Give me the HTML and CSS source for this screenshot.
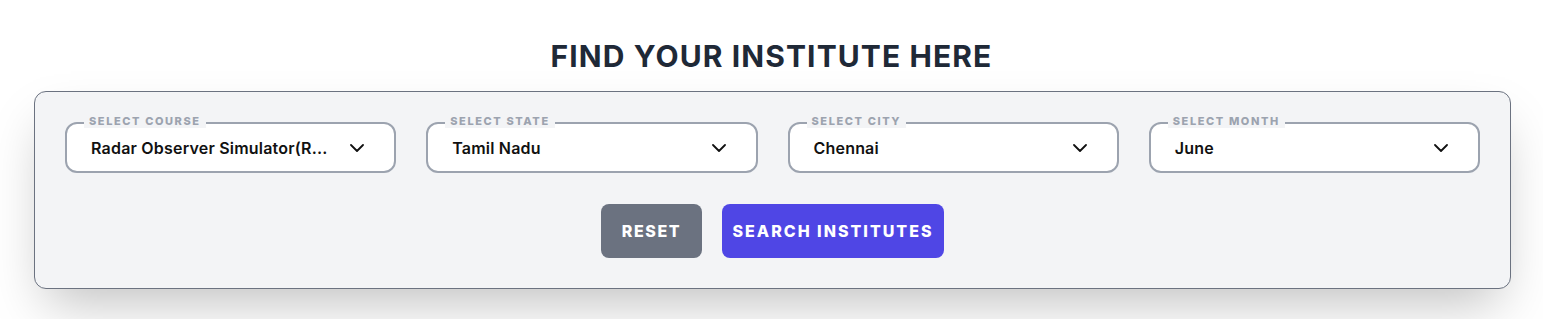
FILE: index.html
```html
<!DOCTYPE html>
<html lang="en">
<head>
<meta charset="utf-8">
<title>Find your institute</title>
<link rel="stylesheet" href="styles.css">
</head>
<body>
<section class="finder">
  <h2 class="finder-title">FIND YOUR INSTITUTE HERE</h2>
  <div class="finder-card">
    <div class="fields">
      <div class="field">
        <span class="field-label">SELECT COURSE</span>
        <div class="select">
          <span class="select-value">Radar Observer Simulator(R...</span>
          <svg class="chev" viewBox="0 0 14 8" width="14" height="8"><path d="M1 1l6 6 6-6" fill="none" stroke="#111" stroke-width="1.8" stroke-linecap="round" stroke-linejoin="round"/></svg>
        </div>
      </div>
      <div class="field">
        <span class="field-label">SELECT STATE</span>
        <div class="select">
          <span class="select-value">Tamil Nadu</span>
          <svg class="chev" viewBox="0 0 14 8" width="14" height="8"><path d="M1 1l6 6 6-6" fill="none" stroke="#111" stroke-width="1.8" stroke-linecap="round" stroke-linejoin="round"/></svg>
        </div>
      </div>
      <div class="field">
        <span class="field-label">SELECT CITY</span>
        <div class="select">
          <span class="select-value">Chennai</span>
          <svg class="chev" viewBox="0 0 14 8" width="14" height="8"><path d="M1 1l6 6 6-6" fill="none" stroke="#111" stroke-width="1.8" stroke-linecap="round" stroke-linejoin="round"/></svg>
        </div>
      </div>
      <div class="field">
        <span class="field-label">SELECT MONTH</span>
        <div class="select">
          <span class="select-value">June</span>
          <svg class="chev" viewBox="0 0 14 8" width="14" height="8"><path d="M1 1l6 6 6-6" fill="none" stroke="#111" stroke-width="1.8" stroke-linecap="round" stroke-linejoin="round"/></svg>
        </div>
      </div>
    </div>
    <div class="actions">
      <button class="btn btn-reset">RESET</button>
      <button class="btn btn-search">SEARCH INSTITUTES</button>
    </div>
  </div>
</section>
</body>
</html>
```
FILE: styles.css
```css
* { box-sizing: border-box; }
html, body { margin: 0; padding: 0; background: #ffffff; }
body { font-family: "Inter", "Liberation Sans", sans-serif; }

.finder {
  padding-top: 38px;
  padding-bottom: 30px;
}
.finder-title {
  margin: 0 0 17px;
  text-align: center;
  font-family: "Inter", "DejaVu Sans", sans-serif;
  font-weight: 700;
  font-size: 30px;
  line-height: 36px;
  letter-spacing: 1.1px;
  color: #1f2937;
}
.finder-card {
  margin-left: 34px;
  width: 1477px;
  background: #f3f4f6;
  border: 1px solid #6b7280;
  border-radius: 12px;
  padding: 30px 30px 30px;
  box-shadow: 0 25px 50px -12px rgba(0, 0, 0, 0.25);
}
.fields {
  display: grid;
  grid-template-columns: repeat(4, 1fr);
  gap: 30px;
}
.field {
  position: relative;
}
.field-label {
  position: absolute;
  left: 19px;
  top: -7px;
  padding: 0 5px;
  background: #f3f4f6;
  font-size: 11px;
  line-height: 13px;
  font-weight: 800;
  letter-spacing: 1.6px;
  color: #9ca3af;
}
.select {
  height: 51px;
  border: 2px solid #9ca3af;
  border-radius: 12px;
  background: #ffffff;
  display: flex;
  align-items: center;
  justify-content: space-between;
  padding: 0 30px 0 24px;
}
.select-value {
  font-size: 16px;
  font-weight: 600;
  letter-spacing: 0.2px;
  color: #111111;
  white-space: nowrap;
}
.chev { display: block; }
.actions {
  display: flex;
  justify-content: center;
  gap: 20px;
  margin-top: 31px;
}
.btn {
  height: 54px;
  border: none;
  border-radius: 8px;
  color: #ffffff;
  font-family: "Inter", "Liberation Sans", sans-serif;
  font-size: 16px;
  font-weight: 800;
  letter-spacing: 2px;
  padding: 0;
  text-align: center;
}
.btn-reset { width: 101px; background: #6b7280; letter-spacing: 1.6px; }
.btn-search { width: 222px; background: #4f46e5; }
```
